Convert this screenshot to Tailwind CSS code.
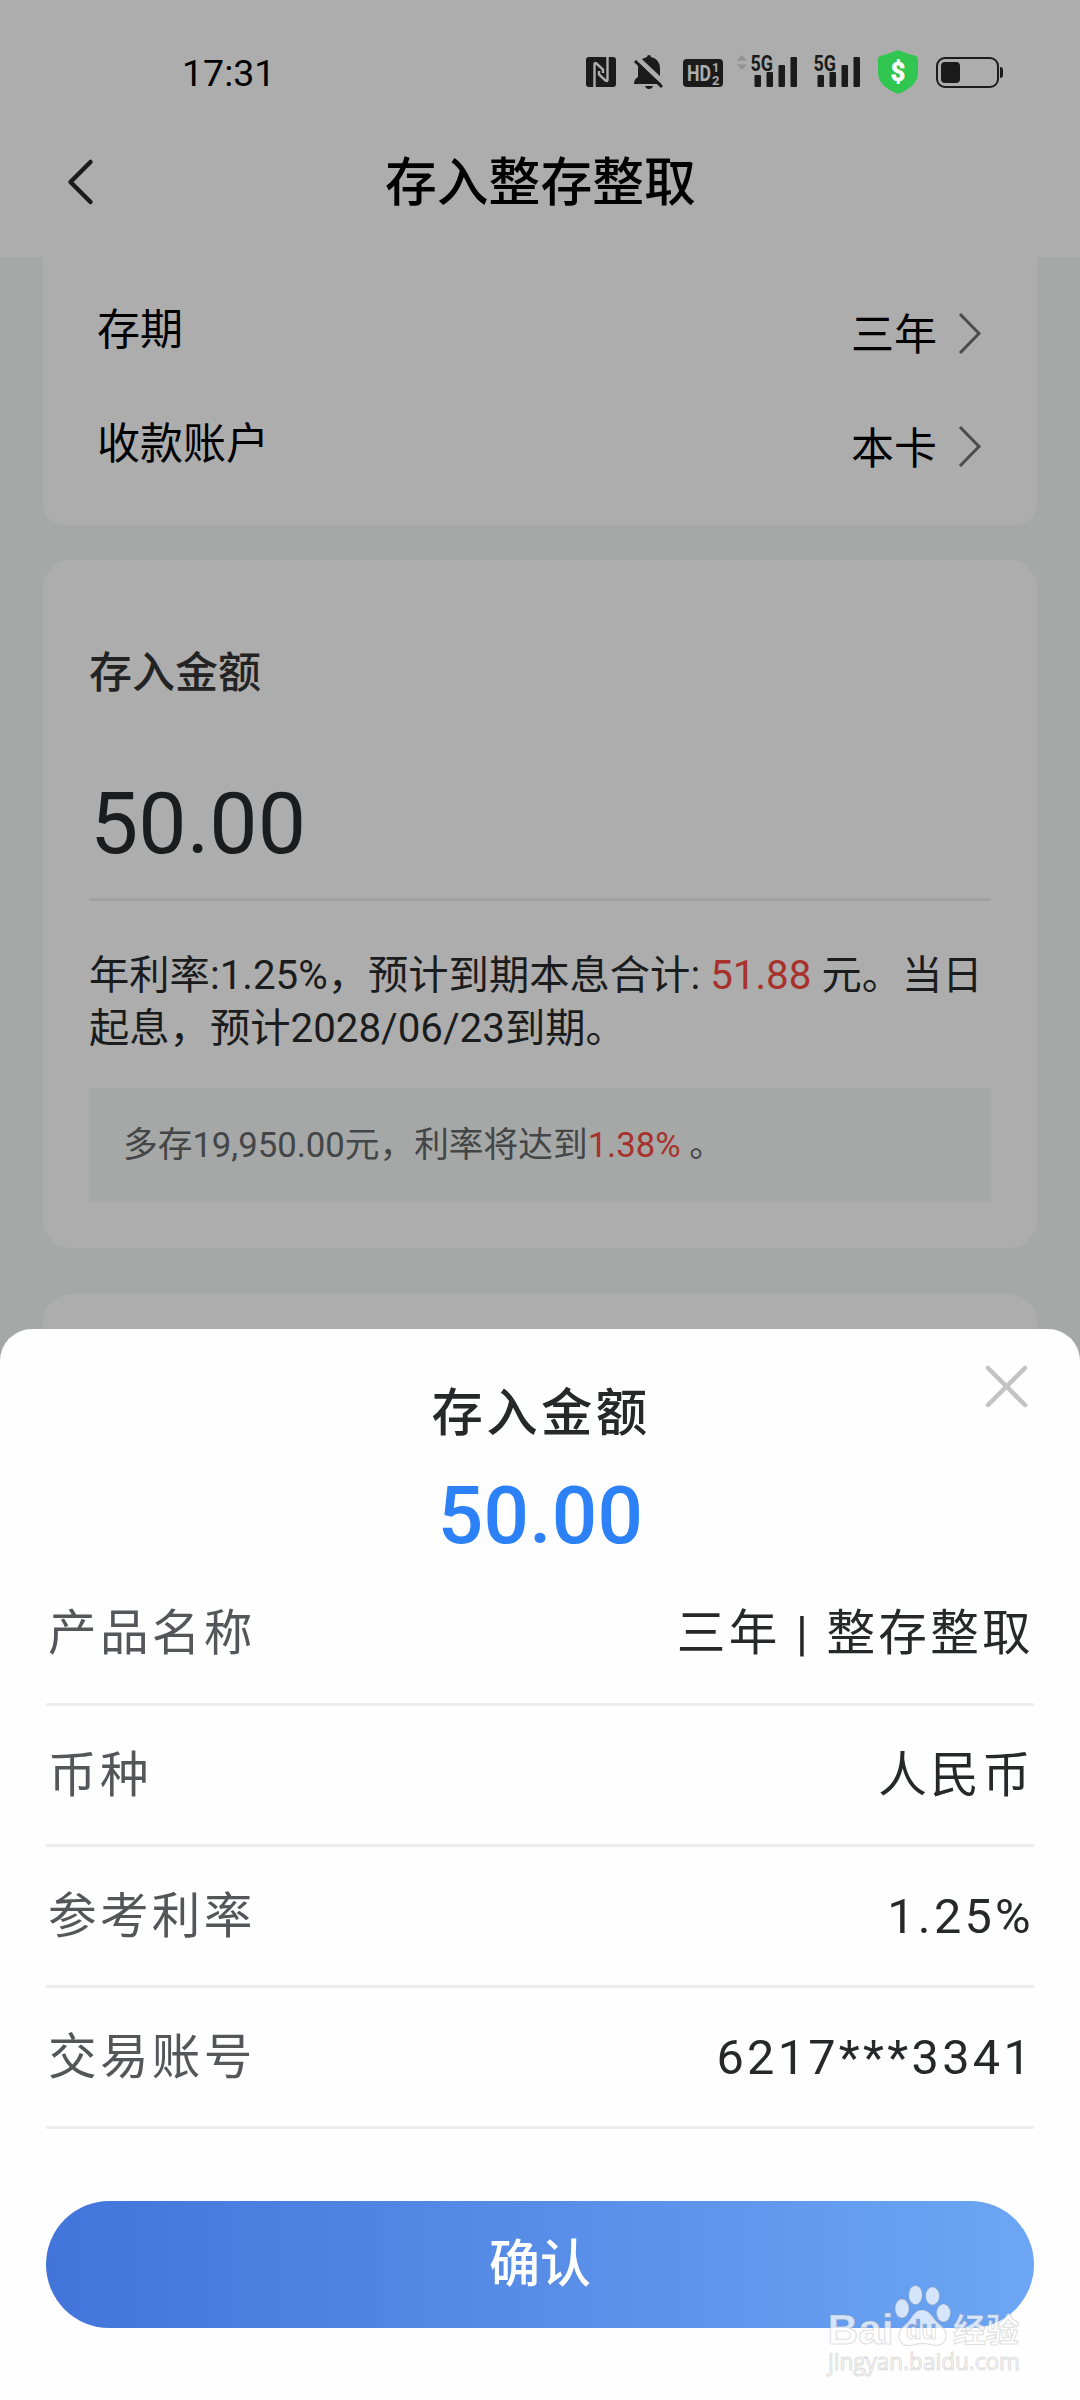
<!DOCTYPE html>
<html lang="zh-CN">
<head>
<meta charset="UTF-8">
<title>存入整存整取</title>
<script src="https://cdn.jsdelivr.net/npm/@tailwindcss/browser@4"></script>
</head>
<body class="w-[1080px] h-[2400px] overflow-hidden bg-[#a5a8a6] font-['Roboto','Noto_Sans_CJK_SC',sans-serif]">
<main class="relative w-[1080px] h-[2400px] overflow-hidden">
  <header class="h-[257px] bg-[#adadad]">
    <!-- status bar -->
    <div class="h-[110px] pt-[46px] pl-[182px] flex items-start">
      <span class="w-[402px] text-[37.500px] leading-[54px] text-black">17:31</span>
      <svg class="block -mt-4" width="440" height="90" viewBox="584 30 440 90" fill="#1b1b1b">
        <rect x="586" y="57" width="30" height="30" rx="3"/>
        <path d="M594.500 87V64.500q0-2.500 2-1l6.500 6V73M607.500 57v22.500q0 2.500-2 1l-6.500-6V71" fill="none" stroke="#adadad" stroke-width="2.400"/>
        <path d="M647 57q0-2 2-2t2 2q9 2 9 12v8q4 2 4 7h-30q0-5 4-7v-8q0-10 9-12zM645 86h8q-1 3-4 3t-4-3z"/>
        <path d="M636 57l31 29" stroke="#adadad" stroke-width="5"/>
        <path d="M635 61l27 26" stroke="#1b1b1b" stroke-width="3"/>
        <rect x="683" y="59" width="40" height="28" rx="4"/>
        <g fill="#adadad" font-family="Roboto" font-weight="700">
          <text x="687" y="81" font-size="22" textLength="24" lengthAdjust="spacingAndGlyphs">HD</text>
          <text x="712" y="72" font-size="13">1</text><text x="712" y="84.500" font-size="13">2</text>
        </g>
        <path d="M742 55l5 5.500h-10zM742 70l5-5.500h-10z" fill="#929292"/>
        <g id="signal">
          <text x="750.500" y="70.500" font-family="Roboto" font-weight="700" font-size="22" textLength="22.500" lengthAdjust="spacingAndGlyphs">5G</text>
          <rect x="754.500" y="75" width="6.500" height="12" rx="1"/><rect x="766.500" y="72" width="6.500" height="15" rx="1"/><rect x="778.500" y="65" width="6.500" height="22" rx="1"/><rect x="790.500" y="57" width="6.500" height="30" rx="1"/>
        </g>
        <use href="#signal" x="63"/>
        <path d="M898 50q10 4 18 6q2 1 2 3v14q0 13-20 21q-20-8-20-21V59q0-2 2-3q8-2 18-6z" fill="#31c650"/>
        <text x="898" y="80.500" text-anchor="middle" fill="#fff" stroke="#fff" stroke-width=".8" font-family="Roboto" font-weight="700" font-size="25">$</text>
        <rect x="937" y="58" width="61" height="29" rx="8" fill="none" stroke="#1b1b1b" stroke-width="2"/>
        <rect x="941" y="62" width="19" height="21" rx="4"/><path d="M1000 67q3 0 3 3v5q0 3-3 3z"/>
      </svg>
    </div>
    <!-- title bar -->
    <div class="h-[147px] pl-[65px] flex items-start">
      <svg class="mt-[48px] block" width="30" height="48" viewBox="0 0 30 48" fill="none" stroke="#1b1b1b" stroke-width="4.500" stroke-linecap="round" stroke-linejoin="round"><path d="M25.500 4L5.500 24l20 20"/></svg>
      <h1 class="ml-[290px] mt-[34px] text-[51.800px] leading-[80px] font-medium text-black whitespace-nowrap">存入整存整取</h1>
    </div>
  </header>

  <section class="mx-[43px] h-[268px] bg-[#adadad] rounded-b-[22px] pl-[54px] pr-[55px] text-[43px] leading-[60px] text-black">
    <div class="h-[114px] pt-[43px] flex justify-between">
      <span>存期</span>
      <span class="flex gap-[21px] pt-[5px]">三年
        <svg class="mt-[6px]" width="24" height="44" viewBox="0 0 24 44" fill="none" stroke="#4c4c4c" stroke-width="3"><path d="M2 3l19 19.500L2 42"/></svg></span>
    </div>
    <div class="h-[114px] pt-[43px] flex justify-between">
      <span>收款账户</span>
      <span class="flex gap-[21px] pt-[5px]">本卡
        <svg class="mt-[5px]" width="24" height="44" viewBox="0 0 24 44" fill="none" stroke="#4c4c4c" stroke-width="3"><path d="M2 3l19 19.500L2 42"/></svg></span>
    </div>
  </section>

  <section class="mx-[43px] mt-[35px] h-[688px] bg-[#adadad] rounded-[28px] px-[46px] pt-[83px] text-[#1b1c1d]">
    <h2 class="text-[43px] leading-[60px] font-medium text-[#232323]">存入金额</h2>
    <div class="mt-[63px] h-[135px] border-b-3 border-[#a1a1a1] pl-px text-[86px] leading-[100px] pt-[8px]">50.00</div>
    <p class="mt-[48px] text-[40.300px] leading-[53px] whitespace-nowrap">年利率:1.25%，预计到期本息合计: <span class="text-[#a8312c]">51.88</span> 元。当日<br>起息，预计2028/06/23到期。</p>
    <div class="mt-[33px] h-[114px] bg-[#a5a8a6] px-[34px] text-[34.700px] leading-[114px] text-[#434546] whitespace-nowrap">多存19,950.00元，利率将达到<span class="text-[#a8312c]">1.38%</span> 。</div>
  </section>
  <section class="mx-[43px] mt-[46px] h-[200px] bg-[#adadad] rounded-t-[28px]"></section>

  <!-- confirmation sheet -->
  <div class="absolute left-0 bottom-0 w-[1080px] h-[1071px] bg-[#fefefe] rounded-t-[32px] px-[46px] text-[#27282a]">
    <svg class="absolute right-[51px] top-[35px]" width="45" height="45" viewBox="0 0 45 45" stroke="#c3c3c3" stroke-width="4.500" stroke-linecap="round"><path d="M4 4l37 37M41 4L4 41"/></svg>
    <h2 class="pt-[45px] pl-[2px] text-center text-[51.400px] leading-[80px] tracking-[3.300px] font-medium">存入金额</h2>
    <div class="mt-[12px] h-[99px] pl-px text-center text-[80px] leading-[100px] font-medium tracking-[0.300px] text-[#2d81f7]">50.00</div>
    <dl class="text-[48.600px] tracking-[3.300px] leading-[70px]">
      <div class="h-[141px] pt-[34px] pl-[2px] border-b-3 border-[#ededed] flex justify-between"><dt class="text-[#555659]">产品名称</dt><dd>三年 | 整存整取</dd></div>
      <div class="h-[141px] pt-[35px] pl-[2px] border-b-3 border-[#ededed] flex justify-between"><dt class="text-[#555659]">币种</dt><dd>人民币</dd></div>
      <div class="h-[141px] pt-[35px] pl-[2px] border-b-3 border-[#ededed] flex justify-between"><dt class="text-[#555659]">参考利率</dt><dd>1.25%</dd></div>
      <div class="h-[141px] pt-[35px] pl-[2px] border-b-3 border-[#ededed] flex justify-between"><dt class="text-[#555659]">交易账号</dt><dd>6217***3341</dd></div>
    </dl>
    <button class="mt-[72px] w-[988px] h-[127px] rounded-full bg-linear-to-r/srgb from-[#4274da] to-[#6da6f4] text-white text-[51px] font-medium leading-[127px] block">确认</button>
  </div>

  <!-- watermark -->
  <svg class="absolute left-[820px] top-[2270px]" width="210" height="120" viewBox="820 2270 210 120" fill="#fff" fill-opacity=".72" stroke="#999" stroke-opacity=".3" stroke-width="1.200">
    <defs><linearGradient id="du" gradientUnits="userSpaceOnUse" x1="0" y1="2318" x2="0" y2="2338"><stop offset=".5" stop-color="#6da0ef"/><stop offset=".5" stop-color="#fff"/></linearGradient></defs>
    <g font-family="Liberation Sans" font-weight="700">
      <text x="827.500" y="2343.500" font-size="42" textLength="66" lengthAdjust="spacingAndGlyphs">Bai</text>
      <ellipse cx="902" cy="2308.500" rx="7" ry="9.500"/><ellipse cx="915.500" cy="2295" rx="6.800" ry="9.500"/><ellipse cx="932.500" cy="2296" rx="7" ry="9"/><ellipse cx="943.500" cy="2313" rx="7" ry="9"/>
      <path d="M922 2310c8 0 10 7 15 12c6 5 10 9 9 15c-1 8-8 9-13 8c-7-2-14-2-20 0c-7 2-13-1-14-8c-1-7 4-10 9-15c5-6 7-12 14-12z"/>
      <text x="906" y="2339" font-size="27" fill="url(#du)" fill-opacity=".9" textLength="31" lengthAdjust="spacingAndGlyphs">du</text>
    </g>
    <text x="953" y="2341.500" font-size="33" font-weight="700" font-family="Noto Sans CJK SC">经验</text>
    <text x="828" y="2370" font-size="23" font-family="Open Sans, sans-serif" textLength="192" lengthAdjust="spacingAndGlyphs">jingyan.baidu.com</text>
  </svg>
</main>
</body>
</html>
